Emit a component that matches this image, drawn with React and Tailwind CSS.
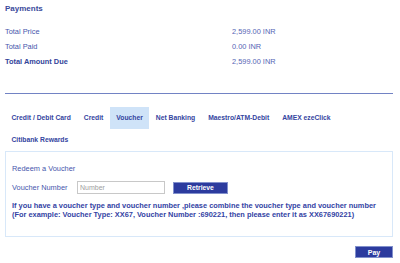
export default function App() {
  const tabs1 = ["Credit / Debit Card", "Credit", "Voucher", "Net Banking", "Maestro/ATM-Debit", "AMEX ezeClick"];
  return (
    <div className="w-[400px] h-[263px] bg-white pl-[5px] pr-[7px] overflow-hidden" style={{ fontFamily: '"Liberation Sans", Arial, sans-serif' }}>
      <div className="pt-[4px] h-[24px] text-[8px] leading-[10px] font-bold text-[#3a4a9c]">Payments</div>
      <div className="grid grid-cols-[227px_1fr] text-[7.4px] leading-[15px] text-[#4656ac]">
        <div>Total Price</div>
        <div className="text-[#5565b5]">2,599.00 INR</div>
        <div>Total Paid</div>
        <div className="text-[#5565b5]">0.00 INR</div>
        <div className="font-bold text-[#33439a]">Total Amount Due</div>
        <div className="text-[#5565b5]">2,599.00 INR</div>
      </div>
      <div className="mt-[24px] border-t border-[#7283c4]"></div>
      <div className="mt-[13px] flex flex-wrap text-[6.75px] font-bold text-[#3444a0]">
        {tabs1.map((t) => (
          <div key={t} className={"h-[22px] px-[6.5px] flex items-center " + (t === "Voucher" ? "bg-[#cfe3f8]" : "")}>{t}</div>
        ))}
        <div className="h-[22px] px-[6.5px] flex items-center">Citibank Rewards</div>
      </div>
      <div className="border border-[#d8e8f9] h-[86px] pl-[6px] pt-[12px] text-[7.4px] text-[#4656ac]">
        <div className="leading-[10px]">Redeem a Voucher</div>
        <div className="mt-[7px] flex items-center h-[13px]">
          <div className="w-[65px]">Voucher Number</div>
          <input className="w-[88px] h-[13px] border border-[#c8c8c8] px-[2px] text-[7px] text-[#555] placeholder:text-[#a0a0a0] outline-none" placeholder="Number" />
          <button className="ml-[8px] w-[55px] h-[12px] mt-[1px] bg-[#2c3b9e] border border-[#8190cc] text-white font-bold text-[6.8px] leading-none">Retrieve</button>
        </div>
        <div className="mt-[7px] font-bold text-[#3343a4] text-[7.4px] leading-[9px] whitespace-nowrap">
          <div>If you have a voucher type and voucher number ,please combine the voucher type and voucher number</div>
          <div>(For example: Voucher Type: XX67, Voucher Number :690221, then please enter it as XX67690221)</div>
        </div>
      </div>
      <div className="flex justify-end mt-[9px]">
        <button className="w-[38px] h-[12px] bg-[#2c3b9e] border border-[#8190cc] text-white font-bold text-[7px] leading-none">Pay</button>
      </div>
    </div>
  );
}
